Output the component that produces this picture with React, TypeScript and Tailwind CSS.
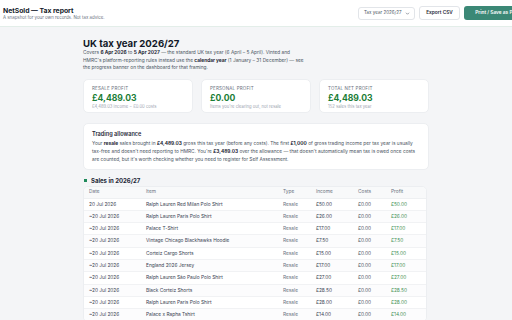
import React from 'react';

type Sale = {
  date: string;
  item: string;
  type: string;
  income: string;
  costs: string;
  profit: string;
};

const sales: Sale[] = [
  { date: '20 Jul 2026', item: 'Ralph Lauren Red Milan Polo Shirt', type: 'Resale', income: '£50.00', costs: '£0.00', profit: '£50.00' },
  { date: '~20 Jul 2026', item: 'Ralph Lauren Paris Polo Shirt', type: 'Resale', income: '£26.00', costs: '£0.00', profit: '£26.00' },
  { date: '~20 Jul 2026', item: 'Palace T-Shirt', type: 'Resale', income: '£17.00', costs: '£0.00', profit: '£17.00' },
  { date: '~20 Jul 2026', item: 'Vintage Chicago Blackhawks Hoodie', type: 'Resale', income: '£7.50', costs: '£0.00', profit: '£7.50' },
  { date: '~20 Jul 2026', item: 'Corteiz Cargo Shorts', type: 'Resale', income: '£15.00', costs: '£0.00', profit: '£15.00' },
  { date: '~20 Jul 2026', item: 'England 2026 Jersey', type: 'Resale', income: '£17.00', costs: '£0.00', profit: '£17.00' },
  { date: '~20 Jul 2026', item: 'Ralph Lauren São Paulo Polo Shirt', type: 'Resale', income: '£27.00', costs: '£0.00', profit: '£27.00' },
  { date: '~20 Jul 2026', item: 'Black Corteiz Shorts', type: 'Resale', income: '£28.50', costs: '£0.00', profit: '£28.50' },
  { date: '~20 Jul 2026', item: 'Ralph Lauren Paris Polo Shirt', type: 'Resale', income: '£28.00', costs: '£0.00', profit: '£28.00' },
  { date: '~20 Jul 2026', item: 'Palace x Rapha Tshirt', type: 'Resale', income: '£14.00', costs: '£0.00', profit: '£14.00' },
];

const cols = 'grid grid-cols-[57px_137px_33px_42px_33px_1fr] pl-[5px] items-center whitespace-nowrap';

// Summary card
const StatCard = ({ label, value, note }: { label: string; value: string; note: string }) => (
  <div className="bg-white rounded-[5px] border border-[#eceef1] px-[8px] pt-[6px] h-[34px]">
    <div className="text-[4.5px] tracking-[0.04em] uppercase text-[#6b7280] leading-[6px]">{label}</div>
    <div className="text-[8.6px] font-bold text-[#1a7d36] leading-[11px] mt-[1px]">{value}</div>
    <div className="text-[4.2px] text-[#9ca3af] leading-[6px]">{note}</div>
  </div>
);

export default function App() {
  return (
    <div className="min-h-screen bg-[#f4f5f7] overflow-hidden font-['Inter',sans-serif] text-[#111827]">
      {/* Header */}
      <div className="bg-white border-b border-[#e3eee9] h-[27px] flex justify-center">
        <div className="w-[564px] shrink-0 flex items-center justify-between px-[8px]">
          <div className="flex items-center gap-[4px]">
            <div className="w-[17px] h-[14px] rounded-[3px] border border-[#dfe5e2] bg-white" />
            <div className="pt-[2px]">
              <div className="text-[6.8px] font-bold leading-[8px]">NetSold — Tax report</div>
              <div className="text-[4.4px] text-[#6b7280] leading-[6px]">A snapshot for your own records. Not tax advice.</div>
            </div>
          </div>
          <div className="flex items-center gap-[4px]">
            <div className="h-[13px] w-[57px] rounded-[3px] border border-[#e2e5e9] flex items-center justify-between pl-[5px] pr-[4px] text-[4.5px] text-[#4b5563] whitespace-nowrap">
              <span>Tax year 2026/27</span>
              <svg width="5" height="5" viewBox="0 0 10 10" fill="none" stroke="#6b7280" strokeWidth="1.4"><path d="M2 3.5l3 3 3-3" /></svg>
            </div>
            <div className="h-[14px] w-[41px] rounded-[3px] border border-[#e2e5e9] flex items-center justify-center text-[4.8px] font-semibold text-[#1f2937] whitespace-nowrap">
              Export CSV
            </div>
            <div className="h-[14px] w-[66px] rounded-[3px] bg-[#3b8876] flex items-center justify-center text-[4.8px] font-semibold text-white whitespace-nowrap">
              Print / Save as PDF
            </div>
          </div>
        </div>
      </div>

      {/* Body */}
      <div className="w-[346px] mx-auto pt-[11px]">
        <h1 className="text-[9.6px] font-bold leading-[12px]">UK tax year 2026/27</h1>
        <p className="w-[225px] text-[4.8px] leading-[7.5px] text-[#4b5563] -mt-[1px]">
          Covers <b className="text-[#1f2937]">6 Apr 2026</b> to <b className="text-[#1f2937]">5 Apr 2027</b> — the standard UK tax year (6 April – 5 April). Vinted and HMRC's platform-reporting rules instead use the <b className="text-[#1f2937]">calendar year</b> (1 January – 31 December) — see the progress banner on the dashboard for that framing.
        </p>

        <div className="grid grid-cols-3 gap-[8px] mt-[7px]">
          <StatCard label="Resale profit" value="£4,489.03" note="£4,489.03 income − £0.00 costs" />
          <StatCard label="Personal profit" value="£0.00" note="Items you're clearing out, not resale" />
          <StatCard label="Total net profit" value="£4,489.03" note="152 sales this tax year" />
        </div>

        <div className="mt-[10px] bg-white rounded-[5px] border border-[#eceef1] px-[8px] pt-[6px] pb-[6px]">
          <div className="text-[5.6px] font-semibold leading-[8px] text-[#1f2937]">Trading allowance</div>
          <p className="mt-[1px] text-[4.8px] leading-[8px] text-[#4b5563]">
            Your <b className="text-[#1f2937]">resale</b> sales brought in <b className="text-[#1f2937]">£4,489.03</b> gross this tax year (before any costs). The first <b className="text-[#1f2937]">£1,000</b> of gross trading income per tax year is usually tax-free and doesn't need reporting to HMRC. You're <b className="text-[#1f2937]">£3,489.03</b> over the allowance — that doesn't automatically mean tax is owed once costs are counted, but it's worth checking whether you need to register for Self Assessment.
          </p>
        </div>

        <div className="mt-[7px] flex items-center gap-[4px] pl-[1px]">
          <span className="w-[3px] h-[3px] bg-[#1f8a5b]" />
          <span className="text-[6px] font-bold text-[#1f2937] leading-[8px]">Sales in 2026/27</span>
        </div>

        <div className="mt-[1px] w-[344px] bg-white rounded-[5px] border border-[#eceef1] overflow-hidden text-[4.8px]">
          <div className={`${cols} h-[12px] bg-[#f8f9fa] text-[#6b7280] border-b border-[#eef0f2]`}>
            <span>Date</span>
            <span>Item</span>
            <span>Type</span>
            <span>Income</span>
            <span>Costs</span>
            <span>Profit</span>
          </div>
          {sales.map((s, i) => (
            <div key={i} className={`${cols} h-[12.3px] border-b border-[#f1f2f4] text-[#374151] ${i % 2 === 1 ? 'bg-[#fcfcfd]' : 'bg-white'}`}>
              <span>{s.date}</span>
              <span>{s.item}</span>
              <span className="text-[#6b7280]">{s.type}</span>
              <span>{s.income}</span>
              <span className="text-[#4b5563]">{s.costs}</span>
              <span className="text-[#3d8f52]">{s.profit}</span>
            </div>
          ))}
        </div>
      </div>
    </div>
  );
}
